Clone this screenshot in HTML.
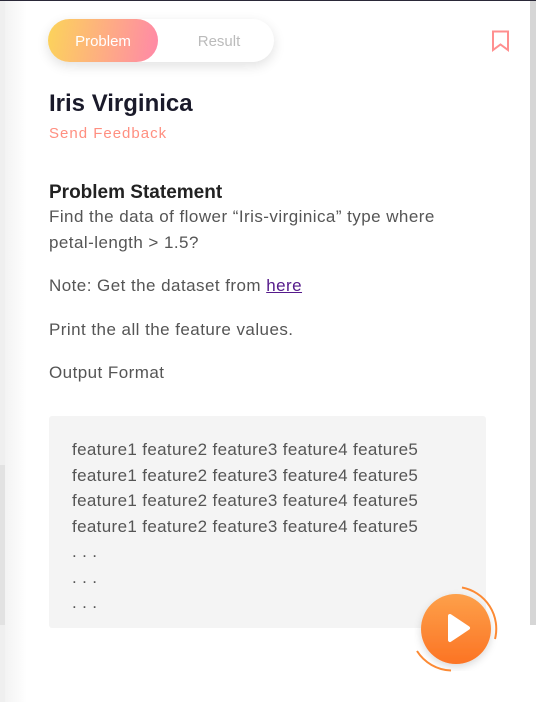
<!DOCTYPE html>
<html><head><style>
*{margin:0;padding:0;box-sizing:border-box}
html,body{width:536px;height:702px;overflow:hidden;background:#fff;font-family:"Liberation Sans",sans-serif}
.abs{position:absolute}
.t{position:absolute;left:49px;white-space:nowrap;color:#555;font-size:17px;letter-spacing:0.45px}
</style></head><body>
<div class="abs" style="left:0;top:0;width:536px;height:1px;background:#2a2838"></div>
<div class="abs" style="left:0;top:1px;width:5px;height:701px;background:#efefef"></div>
<div class="abs" style="left:0;top:465px;width:5px;height:160px;background:#e2e2e2"></div>
<div class="abs" style="left:5px;top:1px;width:22px;height:701px;background:linear-gradient(to right,#f3f3f3,#fff)"></div>
<div class="abs" style="left:530px;top:1px;width:6px;height:624px;background:#d6d6d6"></div>

<div class="abs" style="left:48px;top:19px;width:226px;height:43px;border-radius:22px;background:#fff;box-shadow:0 4px 12px rgba(0,0,0,0.12)"></div>
<div class="abs" style="left:48px;top:19px;width:110px;height:43px;border-radius:22px;background:linear-gradient(100deg,#fcd45a,#ff88a8);color:#fff;font-size:15px;line-height:45px;text-align:center">Problem</div>
<div class="abs" style="left:164px;top:19px;width:110px;height:43px;color:#bbb;font-size:15px;line-height:45px;text-align:center">Result</div>
<svg class="abs" style="left:491px;top:30px" width="20" height="22" viewBox="0 0 20 22"><path d="M2 1.5H17V20L9.5 14.5L2 20Z" fill="none" stroke="#ff8f8f" stroke-width="2"/></svg>

<div class="t" style="top:90px;font-size:24px;font-weight:bold;color:#1a1a2a;letter-spacing:0">Iris Virginica</div>
<div class="t" style="top:125px;font-size:15px;color:#ff8f80;letter-spacing:1px">Send Feedback</div>
<div class="t" style="top:182px;font-size:19px;font-weight:bold;color:#222;letter-spacing:0">Problem Statement</div>
<div class="t" style="top:207px">Find the data of flower “Iris-virginica” type where</div>
<div class="t" style="top:233px">petal-length &gt; 1.5?</div>
<div class="t" style="top:276px">Note: Get the dataset from <span style="color:#551a8b;text-decoration:underline">here</span></div>
<div class="t" style="top:320px">Print the all the feature values.</div>
<div class="t" style="top:363px">Output Format</div>

<div class="abs" style="left:49px;top:416px;width:437px;height:212px;background:#f4f4f4;border-radius:3px"></div>
<div class="t" style="left:72px;top:437px;line-height:25.5px;letter-spacing:0.35px">feature1 feature2 feature3 feature4 feature5<br>feature1 feature2 feature3 feature4 feature5<br>feature1 feature2 feature3 feature4 feature5<br>feature1 feature2 feature3 feature4 feature5<br>. . .<br>. . .<br>. . .</div>

<svg class="abs" style="left:406px;top:580px" width="100" height="100" viewBox="0 0 100 100">
<defs><linearGradient id="g" x1="0" y1="0" x2="0" y2="1"><stop offset="0" stop-color="#fda04a"/><stop offset="1" stop-color="#fc7424"/></linearGradient>
<filter id="s"><feDropShadow dx="0" dy="3" stdDeviation="4" flood-opacity="0.15"/></filter></defs>
<circle cx="50" cy="49" r="35" fill="url(#g)" filter="url(#s)"/>
<path d="M44 36 L62 48 L44 60 Z" fill="#fff" stroke="#fff" stroke-width="4" stroke-linejoin="round"/>
<path d="M56 7.5 A42 42 0 0 1 89 59" fill="none" stroke="#fc8a34" stroke-width="2"/>
<path d="M11 71 A42 42 0 0 0 45 90.5" fill="none" stroke="#fc8a34" stroke-width="2"/>
</svg>
</body></html>
